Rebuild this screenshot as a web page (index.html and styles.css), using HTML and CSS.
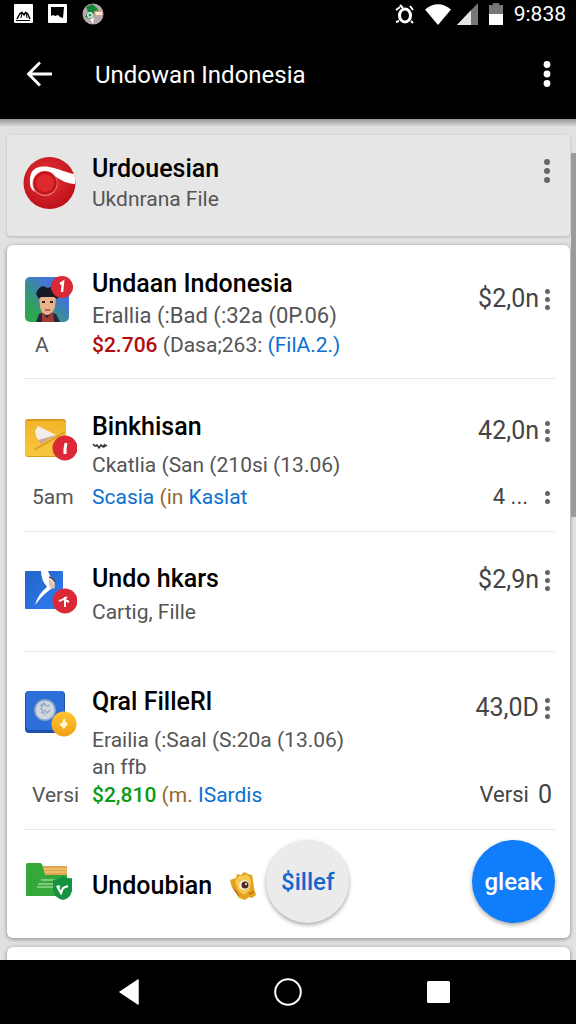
FILE: index.html
```html
<!DOCTYPE html>
<html lang="id">
<head>
  <meta charset="UTF-8">
  <meta name="viewport" content="width=device-width, initial-scale=1">
  <title>Undowan Indonesia</title>
  <link rel="stylesheet" href="styles.css">
</head>
<body>

  <div class="statusbar">
    <svg width="20" height="20" viewBox="0 0 20 20"><rect width="19" height="19" rx="1" fill="#fff"/><path d="M3 15 L6 9.500 L8 8.500 L10 11 L11.500 8.500 L13.500 9.500 L16 15" fill="none" stroke="#000" stroke-width="1.500"/><path d="M2 16.500h14M8 9l-1 5M12 9l1 5" fill="none" stroke="#000" stroke-width="1"/></svg>
    <svg width="20" height="20" viewBox="0 0 20 20"><rect width="19" height="19" rx="1" fill="#fff"/><path d="M3 3h13l-1 11-3-1-2-2-3 1-2-1-2 1z" fill="#000"/></svg>
    <svg width="22" height="22" viewBox="0 0 22 22"><circle cx="11" cy="11" r="10.500" fill="#b5a9ad"/><path d="M4 4l6-3 4 3 4 5-6 1-3 6-6-2 3-5z" fill="#15853c"/><path d="M12 8l9-1-2 7-6-2z" fill="#d9a07c"/><path d="M13 9h7v3h-6z" fill="#f6e9d9"/><circle cx="8" cy="12" r="3" fill="#d8f1df"/><circle cx="8" cy="12" r="1.500" fill="#2b9650"/><path d="M8 16l4-1-1 6z" fill="#fff"/></svg>
    <span class="status-space"></span>
    <svg class="alarm" width="20" height="21" viewBox="0 0 20 21"><ellipse cx="10" cy="11.500" rx="5.500" ry="6.500" fill="none" stroke="#fff" stroke-width="3"/><path d="M1 6l4-3M15 2l3 4M4 17l-3 1M16 17l2 2M5 1l3 3" stroke="#fff" stroke-width="2"/></svg>
    <svg class="wifi" width="26" height="21" viewBox="0 0 26 21"><path d="M0 5.500Q13-5 26 5.500L13 21z" fill="#fff"/></svg>
    <svg class="signal" width="21" height="22" viewBox="0 0 21 22"><path d="M21 0v22H0z" fill="#777"/><path d="M14 7.300V22H0z" fill="#e4e4e4"/></svg>
    <svg class="battery" width="14" height="22" viewBox="0 0 14 22"><path d="M4 0h6v2h4v10H0V2h4z" fill="#777"/><path d="M0 11h14v11H0z" fill="#fff"/></svg>
    <span class="clock">9:838</span>
  </div>

  <header class="appbar">
    <button class="icon-btn" aria-label="Kembali">
      <svg width="26" height="26" viewBox="0 0 26 26"><path d="M25 13H2M13 1.500L1.500 13 13 24.500" fill="none" stroke="#fff" stroke-width="2.800"/></svg>
    </button>
    <h1>Undowan Indonesia</h1>
    <button class="icon-btn" aria-label="Menu">
      <svg width="8" height="26" viewBox="0 0 8 26"><g fill="#fff"><circle cx="4" cy="3.500" r="3.400"/><circle cx="4" cy="13" r="3.400"/><circle cx="4" cy="22.500" r="3.400"/></g></svg>
    </button>
  </header>

  <main class="content">
    <section class="card account">
      <svg class="account-logo" width="54" height="54" viewBox="0 0 54 54">
        <defs><radialGradient id="red" cx=".45" cy=".4" r=".6"><stop offset="0" stop-color="#e8383a"/><stop offset="1" stop-color="#bd1019"/></radialGradient></defs>
        <circle cx="26.500" cy="27" r="26" fill="url(#red)"/>
        <path d="M7 27C6 14 13 9 26 11C37 13 44 17 51 18Q53 23 52 28C44 28 38 24 33 21C26 17 14 18 11 27Q10 32 12 36Q7 33 7 27z" fill="#fff"/>
        <circle cx="22" cy="27.500" r="12.500" fill="#ea7f7e"/>
        <circle cx="22" cy="27" r="11.800" fill="#c3161d"/>
        <circle cx="22" cy="27" r="9" fill="#de2a2e"/>
      </svg>
      <div class="text">
        <h2>Urdouesian</h2>
        <p>Ukdnrana File</p>
      </div>
      <button class="dots big" aria-label="Opsi"><i></i><i></i><i></i></button>
    </section>

    <section class="card list">
      <article class="item first">
        <svg class="thumb" width="54" height="54" viewBox="0 0 54 54">
          <defs><linearGradient id="bg" x1="1" y1="0" x2="0" y2="1"><stop offset=".3" stop-color="#4573d9"/><stop offset=".8" stop-color="#2fa552"/></linearGradient></defs>
          <rect x="2" y="5" width="44" height="45" rx="5" fill="url(#bg)"/>
          <path d="M13 50l3-8 8-3 9 3 4 8z" fill="#25283c"/>
          <path d="M19 40l5 6 6-6 1 10H19z" fill="#a33a32"/>
          <path d="M16 24h17l-1 11q-3 8-8 8t-7-8z" fill="#e8b38e"/>
          <path d="M13 22q2-7 7-8l5 2 7-3 3 8 2 3-3 3-3-2H18l-2 2z" fill="#171b25"/>
          <path d="M19 30h3M27 30h3" stroke="#352016" stroke-width="2"/><path d="M22 38h5" stroke="#b5493e" stroke-width="1.500"/>
          <circle cx="39" cy="15" r="11" fill="#db2936"/>
          <path d="M37 12l3-2-1 10" fill="none" stroke="#fff" stroke-width="2.500"/>
        </svg>
        <div class="text">
          <h2>Undaan Indonesia</h2>
          <p>Erallia (:Bad (:32a (0P.06)</p>
        </div>
        <div class="price">$2,0n <button class="dots" aria-label="Opsi"><i></i><i></i><i></i></button></div>
        <span class="label indent">A</span>
        <p class="meta"><b class="red">$2.706</b> (Dasa;263: <a href="#">(FilA.2.)</a></p>
      </article>

      <article class="item second">
        <svg class="thumb" width="54" height="54" viewBox="0 0 54 54">
          <defs><linearGradient id="yl" x1="0" y1="0" x2="0" y2="1"><stop offset="0" stop-color="#f2b52a"/><stop offset="1" stop-color="#f8c73f"/></linearGradient></defs>
          <rect x="2" y="4" width="41" height="38" rx="3" fill="#dc9a1c"/>
          <rect x="2" y="6" width="41" height="35" rx="3" fill="url(#yl)"/>
          <path d="M11 35L42 17" stroke="#db9d24" stroke-width="1.500" fill="none"/>
          <path d="M12 16l3-5 18 9-15 8q-5-4-6-12z" fill="#f4eeea"/>
          <path d="M33 20l-15 9-3-4z" fill="#c9a995"/>
          <circle cx="42" cy="33" r="12.500" fill="#dc2938"/>
          <path d="M43 28l-1 6v5" fill="none" stroke="#fff" stroke-width="3"/>
        </svg>
        <div class="text">
          <h2>Binkhisan</h2>
          <svg class="scribble" width="16" height="7" viewBox="0 0 16 7"><path d="M1 1l2 2 2-1 2 3 2-3 2 2 2-3M12 4l3-2" fill="none" stroke="#333" stroke-width="1.500"/></svg>
          <p>Ckatlia (San (210si (13.06)</p>
        </div>
        <div class="price">42,0n <button class="dots" aria-label="Opsi"><i></i><i></i><i></i></button></div>
        <span class="label">5am</span>
        <p class="meta"><a href="#">Scasia</a> <span class="brown">(in</span> <a href="#">Kaslat</a></p>
        <div class="extra more">4 ... <button class="dots" aria-label="Lainnya"><i></i><i></i></button></div>
      </article>

      <article class="item third">
        <svg class="thumb" width="54" height="54" viewBox="0 0 54 54">
          <defs><linearGradient id="bl" x1="0" y1="0" x2="1" y2="1"><stop offset="0" stop-color="#2364c9"/><stop offset="1" stop-color="#2f7df1"/></linearGradient></defs>
          <rect x="2" y="4" width="38" height="38" rx="1" fill="url(#bl)"/>
          <path d="M18 4h7q1 4 4 7 4 4 2 9-10 6-19 18 3-11 12-18-6-7-6-16z" fill="#fff"/>
          <path d="M26 12q5 2 6 9l-4 1-2-4z" fill="#e5c3ae"/><path d="M26 10q4 1 6 5" stroke="#493d45" stroke-width="1.500" fill="none"/>
          <circle cx="42" cy="34" r="12.500" fill="#dc2938"/>
          <path d="M36 34q4-1 8-4M42 30v10M42 33l4 2" fill="none" stroke="#fff" stroke-width="2"/>
        </svg>
        <div class="text">
          <h2>Undo hkars</h2>
          <p>Cartig, Fille</p>
        </div>
        <div class="price">$2,9n <button class="dots" aria-label="Opsi"><i></i><i></i><i></i></button></div>
      </article>

      <article class="item fourth">
        <svg class="thumb" width="54" height="54" viewBox="0 0 54 54">
          <defs><linearGradient id="gold" x1="0" y1="0" x2="0" y2="1"><stop offset="0" stop-color="#ffc531"/><stop offset="1" stop-color="#f0a115"/></linearGradient></defs>
          <rect x="2" y="1" width="40" height="42" rx="4" fill="#1d52ac"/>
          <rect x="3" y="1" width="38" height="39" rx="4" fill="#2d6fd9"/>
          <circle cx="22" cy="20" r="11" fill="#7e9fc9"/><circle cx="22" cy="20" r="9.500" fill="#ced6df"/>
          <path d="M17 16l4-3 2 3 4-1M18 23l4-3 2 3 3-3M21 13l-3 6 4 6" fill="none" stroke="#93a6bd" stroke-width="1.200"/>
          <circle cx="41" cy="34" r="12.500" fill="url(#gold)"/>
          <path d="M41 28l2 4 2 2-4 5-5-5 3-1z" fill="#fff5cf"/>
        </svg>
        <div class="text">
          <h2>Qral FilleRl</h2>
          <p>Erailia (:Saal (S:20a (13.06)<br>an ffb</p>
        </div>
        <div class="price">43,0D <button class="dots" aria-label="Opsi"><i></i><i></i><i></i></button></div>
        <span class="label">Versi</span>
        <p class="meta"><b class="green">$2,810</b> <span class="brown">(m.</span> <a href="#">ISardis</a></p>
        <div class="extra">Versi <span class="zero">0</span></div>
      </article>

      <article class="actions">
        <svg class="folder" width="54" height="42" viewBox="0 0 54 42">
          <path d="M17 5h27v12H17z" fill="#e1a54d"/><path d="M20 8h24M20 11h24" stroke="#f8d18c"/>
          <path d="M3 35V4q0-2 2-2h12q2 0 3 4l2 8h22v19q0 2-2 2z" fill="#35a83b"/>
          <path d="M18 19h16M15 23h18M14 26h16" stroke="#93d78e" stroke-width="1.300"/>
          <path d="M30 19q6-1 10-4 5 3 9 2v13q-2 8-9 9-7-1-10-9z" fill="#159340"/>
          <path d="M34 25l4 7 2-5 5-2M34 25l3 1" fill="none" stroke="#fff" stroke-width="2.200"/>
        </svg>
        <h2>Undoubian</h2>
        <svg class="badge" width="28" height="30" viewBox="0 0 28 30">
          <path d="M1 9l6-2 1-4 4 1 3-3 4 2 4 1 1 5 1 8 2 7-4 3-3-1-4 3-6-2-3-6-4-4z" fill="#e6a21f"/>
          <path d="M6 10l4-5 9-1 3 5-1 10-6 5-6-5z" fill="#f5c953"/>
          <circle cx="15" cy="14" r="5" fill="#f4ead5"/><circle cx="16" cy="14" r="3.500" fill="#4d3020"/><circle cx="17" cy="13" r="1" fill="#fff"/>
          <path d="M5 18l5 7M20 23l5-2" stroke="#b87513" stroke-width="1.500"/>
        </svg>
        <button class="round grey">$illef</button>
        <button class="round blue">gleak</button>
      </article>
    </section>

    <section class="card next"></section>
    <div class="scrollbar"></div>
  </main>

  <nav class="navbar">
    <button class="nav-back" aria-label="Kembali"><svg width="20" height="26" viewBox="0 0 20 26"><path d="M19 1v24L1 13z" fill="#fff" stroke="#fff" stroke-width="1.500" stroke-linejoin="round"/></svg></button>
    <button aria-label="Beranda"><svg width="28" height="28" viewBox="0 0 28 28"><circle cx="14" cy="14" r="12.800" fill="none" stroke="#fff" stroke-width="2"/></svg></button>
    <button class="nav-recent" aria-label="Terbaru"><svg width="24" height="24" viewBox="0 0 24 24"><rect x="1" y="1" width="23" height="22" rx="1.500" fill="#fff"/></svg></button>
  </nav>

</body>
</html>
```

FILE: styles.css
```css
* {
  box-sizing: border-box;
}

body {
  height: 100vh;
  margin: 0;
  display: flex;
  flex-direction: column;
  font-family: Roboto, sans-serif;
  font-size: 21px;
  line-height: 28px;
  color: #555;
  background-color: #e1e1e3;
}

h1, h2, p {
  margin: 0;
}

h2 {
  font-size: 25px;
  font-weight: 500;
  line-height: 32px;
  color: #000;
}

b {
  font-weight: 500;
}

a {
  color: #0b70cf;
  text-decoration: none;
}

svg {
  display: block;
  flex: none;
}

button {
  padding: 0;
  border: none;
  background: none;
  font-family: inherit;
  display: flex;
  align-items: center;
  justify-content: center;
  cursor: pointer;
}

/* top bars */
.statusbar {
  flex: none;
  height: 28px;
  padding: 0 10px 0 14px;
  display: flex;
  align-items: center;
  gap: 14px;
  background-color: #000;
}

.status-space {
  flex: 1;
}

.alarm {
  margin-right: -4px;
}

.wifi {
  margin-right: -8px;
}

.signal, .battery {
  margin-right: -3px;
}

.clock {
  font-size: 21px;
  color: #fff;
}

.appbar {
  flex: none;
  height: 91px;
  padding: 0 25px 0 27px;
  display: flex;
  align-items: center;
  background-color: #000;
}

.appbar h1 {
  flex: 1;
  margin-left: 42px;
  padding-top: 3px;
  font-size: 24px;
  font-weight: 400;
  line-height: 32px;
  color: #fff;
}

/* cards */
.content {
  position: relative;
  flex: 1;
  min-height: 0;
  overflow: hidden;
  padding: 16px 6px 0 7px;
  display: flex;
  flex-direction: column;
  gap: 9px;
  background: linear-gradient(#939495, #e1e1e3 8px);
}

.card {
  flex: none;
  padding: 0 15px 0 16px;
  border-radius: 6px;
  background-color: #fff;
  box-shadow: 0 1px 4px rgba(0, 0, 0, 0.4);
}

.account {
  height: 101px;
  display: flex;
  align-items: center;
  padding-bottom: 5px;
  border-radius: 3px;
  background-color: #e6e6e7;
  box-shadow: 0 1px 3px rgba(0, 0, 0, 0.2);
}

.account-logo {
  margin-right: 15px;
}

.account .text {
  flex: 1;
}

.next {
  height: 60px;
}

.item {
  display: grid;
  grid-template-columns: 69px 1fr auto;
  border-bottom: 1px solid #e9e9e9;
}

.first {
  padding: 23px 0 19px;
}

.second {
  padding: 32px 0 20px;
}

.third {
  padding: 31px 0 25px;
}

.fourth {
  padding: 34px 0 20px;
}

.first .text p {
  margin-top: 2px;
  font-size: 22px;
}

.third .text p {
  margin-top: 3px;
}

.first .meta,
.first .label {
  margin-top: 1px;
}

.second .meta,
.second .label,
.second .extra {
  margin-top: 4px;
}

.fourth .text p {
  margin-top: 9px;
  line-height: 27px;
}

.text {
  white-space: nowrap;
}

.thumb {
  margin-top: 4px;
  margin-bottom: -8px;
}

.scribble {
  margin-bottom: 1px;
}

.label {
  grid-column: 1;
  padding-left: 9px;
}

.indent {
  padding-left: 12px;
}

.meta {
  white-space: nowrap;
}

.price, .extra {
  display: flex;
  align-items: center;
  align-self: start;
  justify-content: flex-end;
  gap: 6px;
  font-size: 25px;
  line-height: 32px;
  padding-right: 5px;
  color: #444;
}

.first .price {
  margin-top: 15px;
}

.second .price {
  margin-top: 4px;
}

.third .price {
  margin-top: 1px;
}

.fourth .price {
  margin-top: 6px;
}

.extra {
  font-size: 22px;
  line-height: 28px;
  padding-right: 3px;
}

.fourth .extra {
  gap: 9px;
}

.more {
  gap: 17px;
  padding-right: 5px;
}

.zero {
  font-size: 25px;
}

.dots {
  flex-direction: column;
  gap: 3px;
}

.dots i {
  width: 5px;
  height: 5px;
  border-radius: 50%;
  background-color: #666;
}

.big {
  align-self: flex-start;
  margin: 24px 5px 0 0;
}

.big i {
  width: 6px;
  height: 6px;
}

.red {
  color: #b30b0b;
}

.green {
  color: #0b9a12;
}

.brown {
  color: #94682c;
}

/* bottom row */
.actions {
  display: flex;
  align-items: center;
  padding: 10px 0 15px;
}

.actions h2 {
  margin: 9px 17px 0 15px;
}

.badge {
  margin: 8px 9px 0 0;
}

.round {
  width: 83px;
  height: 83px;
  border-radius: 50%;
  font-size: 24px;
  font-weight: 500;
  box-shadow: 0 2px 4px rgba(0, 0, 0, 0.35);
}

.grey {
  background-color: #ebebec;
  color: #1467cc;
}

.blue {
  margin-left: auto;
  background-color: #107dfa;
  color: #fff;
}

.scrollbar {
  position: absolute;
  top: 34px;
  right: 0;
  width: 5px;
  height: 364px;
  background-color: #999b9d;
}

.navbar {
  flex: none;
  height: 64px;
  padding-right: 9px;
  display: flex;
  align-items: center;
  justify-content: center;
  background-color: #000;
}

.navbar button {
  width: 48px;
  height: 48px;
}

.navbar .nav-back {
  margin-right: 111px;
}

.navbar .nav-recent {
  margin-left: 102px;
}
```
